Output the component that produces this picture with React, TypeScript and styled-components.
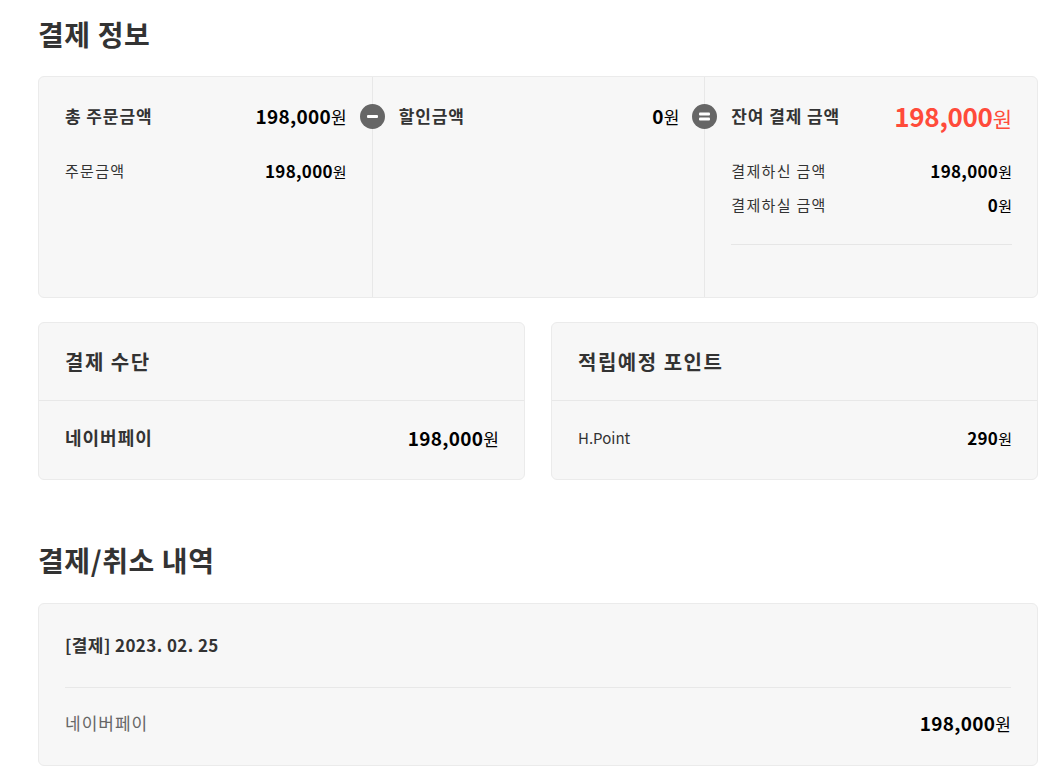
import styled, { createGlobalStyle } from 'styled-components';

const GlobalStyle = createGlobalStyle`
  body {
    margin: 0;
    background: #fff;
    font-family: 'Noto Sans CJK KR', 'Noto Sans', sans-serif;
    color: #333;
  }
`;

type Sign = 'minus' | 'equal';

const SignIcon = ({ type }: { type: Sign }) => (
  <IconWrap>
    <svg width="25" height="25" viewBox="0 0 25 25">
      <circle cx="12.5" cy="12.5" r="12.5" fill="#666" />
      {type === 'minus' ? (
        <rect x="7" y="11" width="11" height="3" rx="1" fill="#fff" />
      ) : (
        <>
          <rect x="7" y="8.5" width="11" height="3" rx="1" fill="#fff" />
          <rect x="7" y="13.5" width="11" height="3" rx="1" fill="#fff" />
        </>
      )}
    </svg>
  </IconWrap>
);

const Price = ({ value, size, unit, color }: { value: string; size: number; unit: number; color?: string }) => (
  <Amount $size={size} $color={color}>
    {value}
    <Unit $size={unit}>원</Unit>
  </Amount>
);

const App = () => {
  return (
    <>
      <GlobalStyle />
      <Page>
        <SectionTitle>결제 정보</SectionTitle>
        <SummaryBox>
          <Column>
            <MainRow>
              <MainLabel>총 주문금액</MainLabel>
              <Price value="198,000" size={19} unit={17} />
            </MainRow>
            <SubList>
              <SubRow>
                <SubLabel>주문금액</SubLabel>
                <Price value="198,000" size={17} unit={15} />
              </SubRow>
            </SubList>
          </Column>
          <Column>
            <SignIcon type="minus" />
            <MainRow>
              <MainLabel>할인금액</MainLabel>
              <Price value="0" size={19} unit={17} />
            </MainRow>
          </Column>
          <Column>
            <SignIcon type="equal" />
            <MainRow>
              <MainLabel>잔여 결제 금액</MainLabel>
              <Price value="198,000" size={26} unit={21} color="#ff4b3a" />
            </MainRow>
            <SubList>
              <SubRow>
                <SubLabel>결제하신 금액</SubLabel>
                <Price value="198,000" size={17} unit={15} />
              </SubRow>
              <SubRow>
                <SubLabel>결제하실 금액</SubLabel>
                <Price value="0" size={17} unit={15} />
              </SubRow>
            </SubList>
            <Divider />
          </Column>
        </SummaryBox>

        <CardGrid>
          <Card>
            <CardHeader>결제 수단</CardHeader>
            <CardBody>
              <MethodLabel>네이버페이</MethodLabel>
              <Price value="198,000" size={19} unit={17} />
            </CardBody>
          </Card>
          <Card>
            <CardHeader>적립예정 포인트</CardHeader>
            <CardBody>
              <PointLabel>H.Point</PointLabel>
              <Price value="290" size={17} unit={15} />
            </CardBody>
          </Card>
        </CardGrid>

        <SectionTitle $spaced>결제/취소 내역</SectionTitle>
        <HistoryCard>
          <HistoryDate>[결제] 2023. 02. 25</HistoryDate>
          <HistoryLine />
          <HistoryRow>
            <HistoryMethod>네이버페이</HistoryMethod>
            <Price value="198,000" size={19} unit={17} />
          </HistoryRow>
        </HistoryCard>
      </Page>
    </>
  );
};

const Page = styled.div`
  width: 1000px;
  padding: 16px 0 40px 38px;
`;

const SectionTitle = styled.h2<{ $spaced?: boolean }>`
  margin: ${(p) => (p.$spaced ? '62px' : '0')} 0 ${(p) => (p.$spaced ? '25px' : '24px')};
  font-size: 28px;
  line-height: 36px;
  font-weight: 700;
  color: #333;
  letter-spacing: 0.6px;
`;

const SummaryBox = styled.div`
  display: grid;
  grid-template-columns: repeat(3, 1fr);
  background: #f7f7f7;
  border: 1px solid #ebebeb;
  border-radius: 6px;
`;

const Column = styled.div`
  position: relative;
  padding: 25px 25px 52px 26px;

  & + & {
    border-left: 1px solid #e8e8e8;
  }
`;

const IconWrap = styled.span`
  position: absolute;
  left: -13px;
  top: 27px;
  width: 25px;
  height: 25px;
  display: flex;
`;

const MainRow = styled.div`
  display: flex;
  justify-content: space-between;
  align-items: center;
  height: 26px;
`;

const MainLabel = styled.span`
  font-size: 17px;
  font-weight: 700;
  color: #333;
  letter-spacing: 0.9px;
`;

const SubList = styled.div`
  display: flex;
  flex-direction: column;
  gap: 12px;
  margin-top: 31px;
`;

const SubRow = styled.div`
  display: flex;
  justify-content: space-between;
  align-items: center;
  height: 22px;
`;

const SubLabel = styled.span`
  font-size: 15px;
  color: #333;
  letter-spacing: 1.3px;
`;

const PointLabel = styled.span`
  font-size: 15px;
  color: #333;
`;

const Amount = styled.span<{ $size: number; $color?: string }>`
  font-size: ${(p) => p.$size}px;
  font-weight: 700;
  color: ${(p) => p.$color || '#000'};
  letter-spacing: ${(p) => (p.$size > 20 ? '-0.3px' : '0.3px')};
  white-space: nowrap;
`;

const Unit = styled.span<{ $size: number }>`
  font-size: ${(p) => p.$size}px;
  font-weight: 400;
  letter-spacing: 0;
`;

const Divider = styled.hr`
  margin: 29px 0 0;
  border: none;
  border-top: 1px solid #e6e6e6;
`;

const CardGrid = styled.div`
  display: grid;
  grid-template-columns: 1fr 1fr;
  gap: 26px;
  margin-top: 24px;
`;

const Card = styled.div`
  background: #f7f7f7;
  border: 1px solid #ebebeb;
  border-radius: 6px;
`;

const CardHeader = styled.div`
  display: flex;
  align-items: center;
  height: 77px;
  padding: 0 26px;
  border-bottom: 1px solid #e8e8e8;
  font-size: 20px;
  font-weight: 700;
  color: #333;
  letter-spacing: 1.5px;
`;

const CardBody = styled.div`
  display: flex;
  justify-content: space-between;
  align-items: center;
  height: 26px;
  padding: 23px 25px 29px 26px;
`;

const MethodLabel = styled.span`
  font-size: 18px;
  font-weight: 700;
  color: #333;
  letter-spacing: 1px;
`;

const HistoryCard = styled.div`
  background: #f7f7f7;
  border: 1px solid #ebebeb;
  border-radius: 6px;
  padding: 28px 26px 30px;
`;

const HistoryDate = styled.div`
  font-size: 17px;
  line-height: 26px;
  font-weight: 700;
  color: #333;
  letter-spacing: 0.4px;
`;

const HistoryLine = styled.hr`
  margin: 29px 0 21px;
  border: none;
  border-top: 1px solid #e8e8e8;
`;

const HistoryRow = styled.div`
  display: flex;
  justify-content: space-between;
  align-items: center;
  height: 26px;
`;

const HistoryMethod = styled.span`
  font-size: 17px;
  color: #666;
  letter-spacing: 1px;
`;

export default App;
